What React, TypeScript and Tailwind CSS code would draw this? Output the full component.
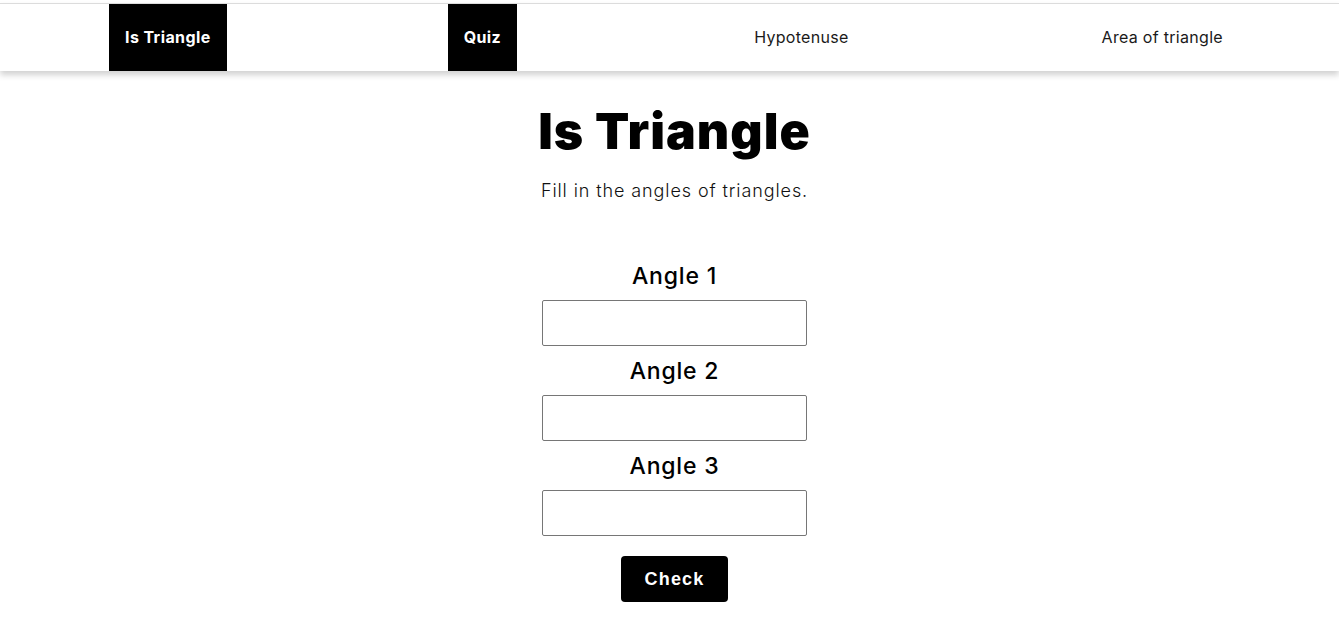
import { useState } from "react";

const links = [
  { label: "Is Triangle", active: true },
  { label: "Quiz", active: true },
  { label: "Hypotenuse", active: false },
  { label: "Area of triangle", active: false },
];

export default function App() {
  const [angles, setAngles] = useState(["", "", ""]);

  function update(i: number, v: string) {
    const next = [...angles];
    next[i] = v;
    setAngles(next);
  }

  return (
    <div className="min-h-screen bg-white font-['Inter',sans-serif] text-black">
      <nav className="mt-[3px] flex h-[68px] items-stretch justify-between border-t border-[#dcdcdc] bg-white pr-[100px] pl-[109px] shadow-[0_4px_6px_rgba(0,0,0,0.18)]">
        {links.map((l) => (
          <a
            key={l.label}
            href="#"
            className={
              l.active
                ? "flex items-center bg-black px-4 pb-[2px] text-[16px] font-bold tracking-[0.4px] text-white"
                : "flex items-center px-4 pb-[2px] text-[16px] font-normal tracking-[0.3px] text-[#1a1a1a]"
            }
          >
            {l.label}
          </a>
        ))}
      </nav>

      <main className="flex flex-col items-center pl-[10px]">
        <h1 className="mt-[26px] text-[50px] leading-[68px] font-black tracking-[1px]">
          Is Triangle
        </h1>
        <p className="mt-[14px] text-[18px] leading-[24px] font-light tracking-[0.9px] text-[#111]">
          Fill in the angles of triangles.
        </p>

        <div className="mt-[49px] flex flex-col items-center">
          {["Angle 1", "Angle 2", "Angle 3"].map((label, i) => (
            <div key={label} className="flex flex-col items-center">
              <label className="text-[23px] leading-[48px] font-medium tracking-[0.8px]">{label}</label>
              <input
                type="number"
                value={angles[i]}
                onChange={(e) => update(i, e.target.value)}
                className="mb-px h-[46px] w-[265px] rounded-[2px] border border-[#767676] px-2 text-base outline-none"
              />
            </div>
          ))}
          <button className="mt-[19px] h-[46px] w-[107px] rounded-[4px] bg-black font-['Liberation_Sans',Arial,sans-serif] text-[18px] font-bold tracking-[1.2px] text-white">
            Check
          </button>
        </div>
      </main>
    </div>
  );
}
